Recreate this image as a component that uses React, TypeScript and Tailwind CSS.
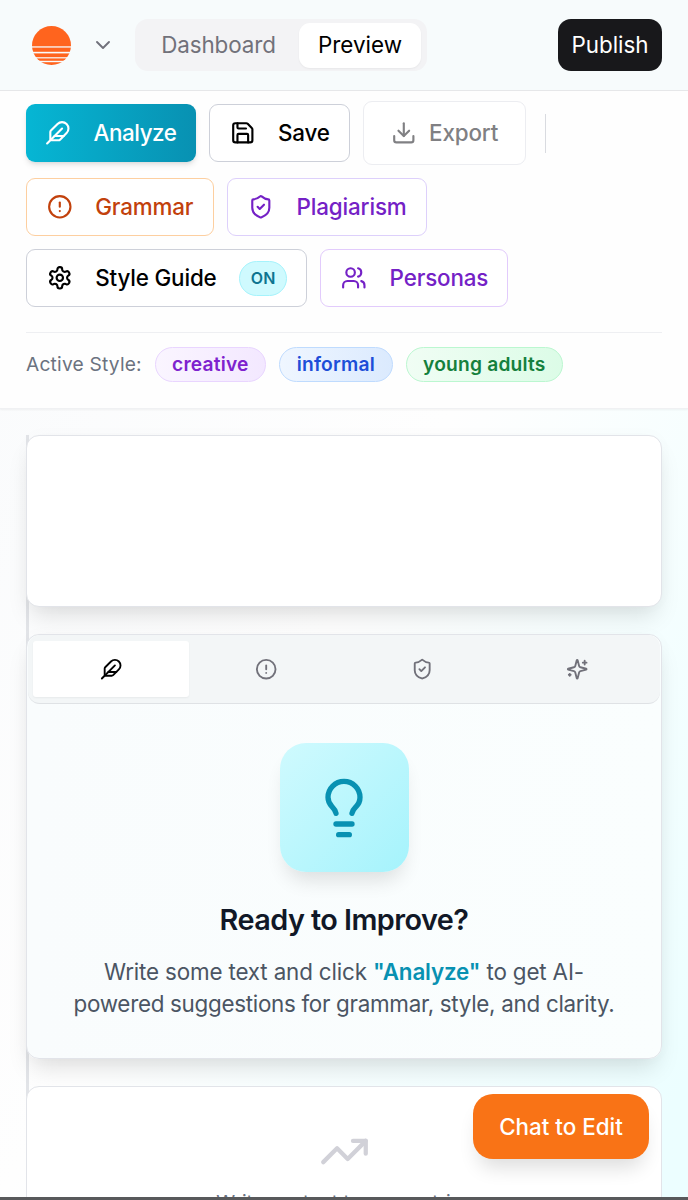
import { useState } from "react"
import {
  ChevronDown,
  CircleAlert,
  Download,
  Feather,
  Lightbulb,
  Save,
  ShieldCheck,
  TrendingUp,
  Users,
} from "lucide-react"

function Logo() {
  return (
    <svg width="39" height="39" viewBox="0 0 39 39" aria-hidden="true">
      <defs>
        <clipPath id="sun">
          <circle cx="19.5" cy="19.5" r="19.5" />
        </clipPath>
      </defs>
      <g clipPath="url(#sun)" fill="#ff641e">
        <rect width="39" height="20.3" />
        <rect y="21.6" width="39" height="4.2" />
        <rect y="27.4" width="39" height="3.8" />
        <rect y="32.4" width="39" height="2.4" />
        <rect y="36.2" width="39" height="3" />
      </g>
    </svg>
  )
}

function Gear({ className }: { className?: string }) {
  return (
    <svg className={className} viewBox="0 0 24 24" fill="none" stroke="currentColor" strokeWidth="2" strokeLinecap="round" strokeLinejoin="round">
      <path d="M12.22 2h-.44a2 2 0 0 0-2 2v.18a2 2 0 0 1-1 1.73l-.43.25a2 2 0 0 1-2 0l-.15-.08a2 2 0 0 0-2.73.73l-.22.38a2 2 0 0 0 .73 2.73l.15.1a2 2 0 0 1 1 1.72v.51a2 2 0 0 1-1 1.74l-.15.09a2 2 0 0 0-.73 2.73l.22.38a2 2 0 0 0 2.73.73l.15-.08a2 2 0 0 1 2 0l.43.25a2 2 0 0 1 1 1.73V20a2 2 0 0 0 2 2h.44a2 2 0 0 0 2-2v-.18a2 2 0 0 1 1-1.73l.43-.25a2 2 0 0 1 2 0l.15.08a2 2 0 0 0 2.73-.73l.22-.39a2 2 0 0 0-.73-2.73l-.15-.08a2 2 0 0 1-1-1.74v-.5a2 2 0 0 1 1-1.74l.15-.09a2 2 0 0 0 .73-2.73l-.22-.38a2 2 0 0 0-2.73-.73l-.15.08a2 2 0 0 1-2 0l-.43-.25a2 2 0 0 1-1-1.73V4a2 2 0 0 0-2-2z" />
      <circle cx="12" cy="12" r="3" />
    </svg>
  )
}

function Sparkle({ className }: { className?: string }) {
  return (
    <svg className={className} viewBox="0 0 24 24" fill="none" stroke="currentColor" strokeWidth="2" strokeLinecap="round" strokeLinejoin="round">
      <path d="M9.937 15.5A2 2 0 0 0 8.5 14.063l-6.135-1.582a.5.5 0 0 1 0-.962L8.5 9.936A2 2 0 0 0 9.937 8.5l1.582-6.135a.5.5 0 0 1 .963 0L14.063 8.5A2 2 0 0 0 15.5 9.937l6.135 1.581a.5.5 0 0 1 0 .964L15.5 14.063a2 2 0 0 0-1.437 1.437l-1.582 6.135a.5.5 0 0 1-.963 0z" />
      <path d="M20 3v4M22 5h-4M4 17v2M5 18H3" />
    </svg>
  )
}

const tabs = [
  { name: "Analyze", icon: Feather },
  { name: "Grammar", icon: CircleAlert },
  { name: "Plagiarism", icon: ShieldCheck },
  { name: "Personas", icon: Sparkle },
]

const styleTags = [
  { label: "creative", className: "w-[111px] from-[#faf5ff] to-[#f3e8ff] text-[#7e22ce] border-[#e9d5ff]" },
  { label: "informal", className: "w-[114px] from-[#eff6ff] to-[#dbeafe] text-[#1d4ed8] border-[#bfdbfe]" },
  { label: "young adults", className: "w-[157px] from-[#f0fdf4] to-[#dcfce7] text-[#15803d] border-[#bbf7d0]" },
]

export default function App() {
  const [activeTab, setActiveTab] = useState("Analyze")

  return (
    <div className="h-[1200px] w-full overflow-hidden flex flex-col bg-gradient-to-br from-slate-50 via-[#fefefe] to-[#ecfeff] to-95% font-['Inter',sans-serif] text-[22.4px] text-black">
      {/* Header */}
      <header className="h-[91px] shrink-0 flex items-center bg-[#f7fbfc] border-b border-[#e6e7e9] pl-8 pr-[26px]">
        <Logo />
        <ChevronDown className="ml-5 w-6 h-6 text-zinc-500" strokeWidth={1.9} />
        <div className="ml-5 w-[292px] h-[52px] flex items-center rounded-[13px] bg-[#f3f3f5] p-1">
          <button className="w-[159px] text-center tracking-[-0.005em] text-[#71717a]">Dashboard</button>
          <button className="ml-px w-[122px] h-[45px] rounded-[11px] bg-white text-center shadow-xs">Preview</button>
        </div>
        <button className="ml-auto w-[104px] h-[52px] rounded-[13px] bg-[#18181b] text-center text-white">Publish</button>
      </header>

      {/* Toolbar */}
      <section className="relative z-10 h-[318px] shrink-0 bg-[#fefefe] border-b border-[#f0f1f3] px-[26px] pt-[10px] shadow-xs">
        <div className="flex flex-wrap items-center gap-[13px] font-medium tracking-[-0.007em]">
          <button className="w-[170px] h-[58px] flex items-center rounded-[9px] bg-gradient-to-r from-[#06b6d4] to-[#0891b2] pl-[19px] tracking-[-0.02em] text-white shadow-md">
            <Feather className="w-[25.6px] h-[25.6px] mr-[23px]" />
            Analyze
          </button>
          <button className="w-[141px] h-[58px] flex items-center rounded-[9px] border border-[#cdd0d9] bg-white pl-5">
            <Save className="w-[25.6px] h-[25.6px] mr-[22.4px]" />
            Save
          </button>
          <button className="w-[163px] h-[64px] flex items-center rounded-[9px] border border-[#ecedf1] bg-white pl-[26.5px] text-[#808083]">
            <Download className="w-[25.6px] h-[25.6px] mr-[13px]" />
            Export
          </button>
          <div className="ml-[6px] mr-[80px] w-px h-[39px] bg-[#d9dbe0]" />
          <button className="w-[188px] h-[58px] flex items-center rounded-[9px] border border-[#fdcfa0] bg-white pl-[19.6px] text-[#c2410c]">
            <CircleAlert className="w-[25.6px] h-[25.6px] mr-[23px]" />
            Grammar
          </button>
          <button className="mr-[100px] w-[200px] h-[58px] flex items-center rounded-[9px] border border-[#ddd0fb] bg-white pl-5 text-[#7421c6]">
            <ShieldCheck className="w-[25.6px] h-[25.6px] mr-[23px]" />
            Plagiarism
          </button>
          <button className="w-[281px] h-[58px] flex items-center rounded-[9px] border border-[#cdd0d9] bg-white pl-[19.6px]">
            <Gear className="w-[25.6px] h-[25.6px] mr-[23px]" />
            Style Guide
            <span className="ml-[22.6px] w-12 h-[35px] flex items-center justify-center rounded-full border border-[#a5f3fc] bg-[#cffafe] pb-px text-base font-semibold tracking-[0.01em] text-[#0e7490]">
              ON
            </span>
          </button>
          <button className="w-[188px] h-[58px] flex items-center rounded-[9px] border border-[#e2cbfc] bg-white pl-5 text-[#7421c6]">
            <Users className="w-[25.6px] h-[25.6px] mr-[23px]" />
            Personas
          </button>
        </div>

        <div className="mt-[25px] flex items-center gap-[13px] border-t border-[#eeeff2] pt-[14px] text-[19.2px]">
          <span className="tracking-[0.01em] text-[#6b7280]">Active Style:</span>
          {styleTags.map((tag) => (
            <span
              key={tag.label}
              className={`h-[35px] flex items-center justify-center rounded-full border bg-gradient-to-r font-semibold tracking-[0.01em] ${tag.className}`}
            >
              {tag.label}
            </span>
          ))}
        </div>
      </section>

      {/* Content */}
      <main className="flex-1 min-h-0 px-[26px] pt-[26px]">
        <div className="flex flex-col gap-[27px] bg-[linear-gradient(#e2e4e8,#e2e4e8)] bg-[length:3px_100%] bg-no-repeat">
          <div className="h-[172px] rounded-[13px] border border-[#e2e4e9] bg-white shadow-[0_14px_24px_-6px_rgba(0,0,0,0.13),0_0_18px_rgba(0,0,0,0.02)]" />

          <div className="h-[425px] rounded-[13px] border border-[#e2e4e9] bg-gradient-to-r from-[#f9fcfd] to-[#fafefe] shadow-[0_14px_24px_-6px_rgba(0,0,0,0.13),0_0_18px_rgba(0,0,0,0.02)]">
            <div className="mx-px h-[69px] flex rounded-[12px] border-b border-[#dfe2e5] bg-[#f3f6f7] px-[5px] py-[6px]">
              {tabs.map((tab) => (
                <button
                  key={tab.name}
                  aria-label={tab.name}
                  onClick={() => setActiveTab(tab.name)}
                  className={`flex-1 flex items-center justify-center rounded-[3px] ${
                    activeTab === tab.name ? "bg-white text-black shadow-xs" : "text-[#71717a]"
                  }`}
                >
                  <tab.icon className="w-[22.4px] h-[22.4px]" />
                </button>
              ))}
            </div>

            <div className="flex flex-col items-center pt-[39px] text-center">
              <div className="w-[129px] h-[129px] flex items-center justify-center rounded-[26px] bg-gradient-to-br from-[#cffafe] to-[#a5f3fc] shadow-[0_14px_20px_-6px_rgba(0,0,0,0.12)]">
                <Lightbulb className="w-16 h-16 text-[#0891b2]" />
              </div>
              <h2 className="mt-[25px] mb-px text-[28.8px] leading-[45px] font-semibold tracking-[-0.019em] text-[#111827]">Ready to Improve?</h2>
              <p className="mt-[13px] leading-8 tracking-[-0.013em] text-[#4b5563]">
                <span className="tracking-[-0.007em]">
                  Write some text and click <span className="font-semibold text-[#0891b2]">"Analyze"</span> to get AI-
                </span>
                <br />
                powered suggestions for grammar, style, and clarity.
              </p>
            </div>
          </div>

          <div className="h-[172px] flex flex-col items-center rounded-[13px] border border-[#e2e4e9] bg-white pt-[39px]">
            <TrendingUp className="w-[51px] h-[51px] text-[#d1d1d8]" />
            <p className="mt-[12px] text-[19.2px] leading-[26px] text-gray-500">Write content to see metrics</p>
          </div>
        </div>
      </main>

      {/* Bottom edge and chat button */}
      <div className="absolute z-20 left-0 top-[1197px] w-full h-[3px] bg-[#58595b]" />
      <button className="absolute right-[39px] top-[1094px] w-[176px] h-[65px] rounded-[20px] bg-[#f97316] text-center font-medium text-white shadow-[0_14px_20px_-6px_rgba(0,0,0,0.14)]">
        Chat to Edit
      </button>
    </div>
  )
}
